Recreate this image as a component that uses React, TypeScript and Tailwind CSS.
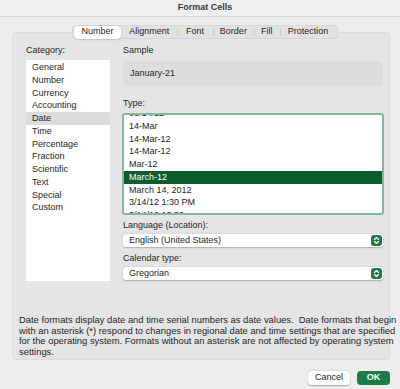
import React from "react";

const categories = [
  "General",
  "Number",
  "Currency",
  "Accounting",
  "Date",
  "Time",
  "Percentage",
  "Fraction",
  "Scientific",
  "Text",
  "Special",
  "Custom",
];

const types = [
  "03/14/12",
  "14-Mar",
  "14-Mar-12",
  "14-Mar-12",
  "Mar-12",
  "March-12",
  "March 14, 2012",
  "3/14/12 1:30 PM",
  "3/14/12 13:30",
];

function Stepper() {
  return (
    <div className="w-[11px] h-[11px] rounded-[3px] bg-[#1f7a45] flex items-center justify-center">
      <svg width="7" height="9" viewBox="0 0 7 9" fill="none">
        <path d="M1.5 3.5 L3.5 1.5 L5.5 3.5" stroke="white" strokeWidth="1.1" strokeLinecap="round" strokeLinejoin="round" />
        <path d="M1.5 5.5 L3.5 7.5 L5.5 5.5" stroke="white" strokeWidth="1.1" strokeLinecap="round" strokeLinejoin="round" />
      </svg>
    </div>
  );
}

function Select({ value }: { value: string }) {
  return (
    <div className="mt-[3px] h-[13px] bg-white rounded-[3px] shadow-[0_0.5px_1.5px_rgba(0,0,0,0.25)] flex items-center justify-between pl-[6px] pr-[1px]">
      <span className="leading-[13px]">{value}</span>
      <Stepper />
    </div>
  );
}

const tabs = [
  { label: "Number", w: "w-[48px]", sel: true },
  { label: "Alignment", w: "w-[56px]", sel: false },
  { label: "Font", w: "w-[36px]", sel: false },
  { label: "Border", w: "w-[41px]", sel: false },
  { label: "Fill", w: "w-[26px]", sel: false },
  { label: "Protection", w: "w-[57px]", sel: false },
];

export default function App() {
  return (
    <div
      className="w-[400px] h-[389px] bg-[#ededed] text-[#262626] text-[9px] flex flex-col overflow-hidden"
      style={{ fontFamily: "'Liberation Sans', Arial, sans-serif" }}
    >
      <div className="h-[17px] shrink-0 bg-[#efefef] border-b border-[#d9d9d9] flex items-center justify-center pl-[10px] font-bold text-[#3a3a3a]">
        Format Cells
      </div>

      <div className="mt-[8px] ml-[72px] w-[266px] h-[14px] relative z-10 bg-[#e2e2e2] border border-[#d6d6d6] rounded-[4px] flex items-center px-[0.5px]">
        {tabs.map((t, i) => (
          <div key={t.label} className={`relative ${t.w} h-full flex items-center justify-center`}>
            {t.sel ? (
              <div className="absolute inset-x-0 -top-[0.5px] -bottom-[0.5px] bg-white rounded-[4px] shadow-[0_0.5px_1.5px_rgba(0,0,0,0.25)]" />
            ) : null}
            {i > 1 ? <div className="absolute left-0 top-[3px] bottom-[3px] w-px bg-[#c7c7c7]" /> : null}
            <span className="relative">{t.label}</span>
          </div>
        ))}
      </div>

      <div className="-mt-[7px] ml-[12px] mr-[10px] h-[328px] bg-[#e5e5e5] border border-[#dcdcdc] rounded-[5px] pt-[11px] flex flex-col">
        <div className="flex pl-[13px] pr-[6px]">
          <div className="w-[84px] flex flex-col">
            <div className="leading-[12px]">Category:</div>
            <div className="mt-[4px] h-[221px] bg-white pt-[1px]">
              {categories.map((c) => (
                <div
                  key={c}
                  className={`h-[12.75px] leading-[12.75px] pl-[6px] ${c === "Date" ? "bg-[#dcdcdc]" : ""}`}
                >
                  {c}
                </div>
              ))}
            </div>
          </div>

          <div className="ml-[13px] w-[260px] flex flex-col">
            <div className="leading-[12px]">Sample</div>
            <div className="mt-[5px] h-[25px] bg-[#dddddd] rounded-[4px] flex items-center pl-[7px]">
              January-21
            </div>
            <div className="mt-[11px] leading-[12px]">Type:</div>
            <div className="mt-[4px] -mx-[1px] h-[102px] border-2 border-[#86b898] rounded-[3px] bg-white overflow-hidden">
              <div className="-mt-[8px]">
                {types.map((t, i) => (
                  <div
                    key={i}
                    className={`h-[12.75px] leading-[12.75px] pl-[5px] ${t === "March-12" ? "bg-[#0d5e2e] text-white" : ""}`}
                  >
                    {t}
                  </div>
                ))}
              </div>
            </div>
            <div className="mt-[4px] leading-[12px]">Language (Location):</div>
            <Select value="English (United States)" />
            <div className="mt-[5px] leading-[12px]">Calendar type:</div>
            <Select value="Gregorian" />
          </div>
        </div>

        <div className="mt-[34px] pl-[6px] text-[9.4px] leading-[10.7px] whitespace-nowrap">
          Date formats display date and time serial numbers as date values.&nbsp; Date formats that begin
          <br />
          with an asterisk (*) respond to changes in regional date and time settings that are specified
          <br />
          for the operating system. Formats without an asterisk are not affected by operating system
          <br />
          settings.
        </div>
      </div>

      <div className="mt-[11px] flex justify-end gap-[7px] pr-[10px]">
        <div className="w-[42px] h-[14px] bg-white rounded-[4px] shadow-[0_0.5px_1.5px_rgba(0,0,0,0.3)] flex items-center justify-center">
          Cancel
        </div>
        <div className="w-[33px] h-[14px] bg-[#1e7c45] rounded-[4px] text-white font-bold flex items-center justify-center">
          OK
        </div>
      </div>
    </div>
  );
}
